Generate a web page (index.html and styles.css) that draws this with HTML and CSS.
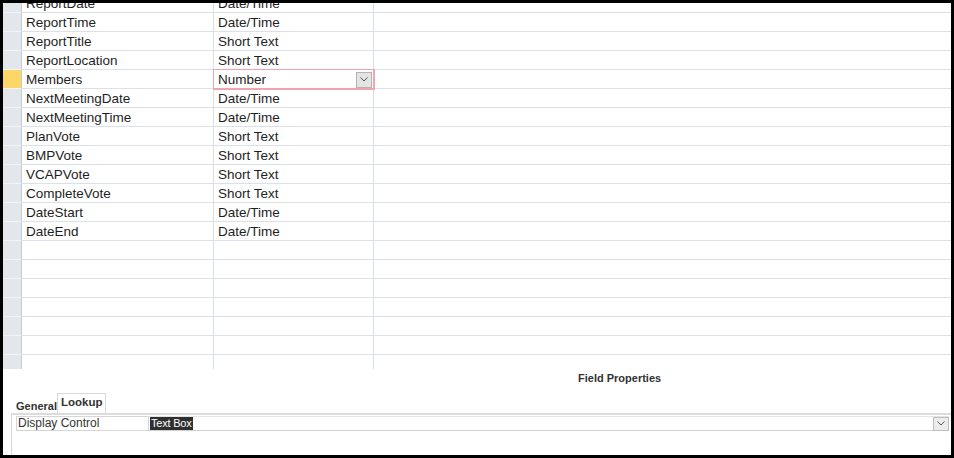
FILE: index.html
```html
<!DOCTYPE html>
<html>
  <head>
    <meta charset="utf-8" />
    <title>Table Design</title>
    <link rel="stylesheet" href="styles.css">
  </head>

  <body>
    <div class="frame">
      <div class="grid">
        <div class="rows">
          <div class="row"><div class="sel"></div><div class="name">ReportDate</div><div class="type">Date/Time</div><div class="rest"></div></div>
          <div class="row"><div class="sel"></div><div class="name">ReportTime</div><div class="type">Date/Time</div><div class="rest"></div></div>
          <div class="row"><div class="sel"></div><div class="name">ReportTitle</div><div class="type">Short Text</div><div class="rest"></div></div>
          <div class="row"><div class="sel"></div><div class="name">ReportLocation</div><div class="type">Short Text</div><div class="rest"></div></div>
          <div class="row current">
            <div class="sel"></div>
            <div class="name">Members</div>
            <div class="type">
              Number
              <span class="drop">
                <svg width="8" height="5" viewBox="0 0 8 5"><polyline points="0.5,0.5 4,4 7.5,0.5" fill="none" stroke="#555" stroke-width="1"/></svg>
              </span>
            </div>
            <div class="rest"></div>
          </div>
          <div class="row"><div class="sel"></div><div class="name">NextMeetingDate</div><div class="type">Date/Time</div><div class="rest"></div></div>
          <div class="row"><div class="sel"></div><div class="name">NextMeetingTime</div><div class="type">Date/Time</div><div class="rest"></div></div>
          <div class="row"><div class="sel"></div><div class="name">PlanVote</div><div class="type">Short Text</div><div class="rest"></div></div>
          <div class="row"><div class="sel"></div><div class="name">BMPVote</div><div class="type">Short Text</div><div class="rest"></div></div>
          <div class="row"><div class="sel"></div><div class="name">VCAPVote</div><div class="type">Short Text</div><div class="rest"></div></div>
          <div class="row"><div class="sel"></div><div class="name">CompleteVote</div><div class="type">Short Text</div><div class="rest"></div></div>
          <div class="row"><div class="sel"></div><div class="name">DateStart</div><div class="type">Date/Time</div><div class="rest"></div></div>
          <div class="row"><div class="sel"></div><div class="name">DateEnd</div><div class="type">Date/Time</div><div class="rest"></div></div>
          <div class="row"><div class="sel"></div><div class="name"></div><div class="type"></div><div class="rest"></div></div>
          <div class="row"><div class="sel"></div><div class="name"></div><div class="type"></div><div class="rest"></div></div>
          <div class="row"><div class="sel"></div><div class="name"></div><div class="type"></div><div class="rest"></div></div>
          <div class="row"><div class="sel"></div><div class="name"></div><div class="type"></div><div class="rest"></div></div>
          <div class="row"><div class="sel"></div><div class="name"></div><div class="type"></div><div class="rest"></div></div>
          <div class="row"><div class="sel"></div><div class="name"></div><div class="type"></div><div class="rest"></div></div>
          <div class="row"><div class="sel"></div><div class="name"></div><div class="type"></div><div class="rest"></div></div>
        </div>
      </div>

      <div class="props-title">Field Properties</div>

      <div class="tabs">
        <div class="tab">General</div>
        <div class="tab active">Lookup</div>
      </div>

      <div class="panel">
        <div class="prop-row">
          <div class="prop-label">Display Control</div>
          <div class="prop-value">
            <span class="picked">Text Box</span>
            <span class="drop small">
              <svg width="8" height="5" viewBox="0 0 8 5"><polyline points="0.5,0.5 4,4 7.5,0.5" fill="none" stroke="#555" stroke-width="1"/></svg>
            </span>
          </div>
        </div>
      </div>
    </div>
  </body>
</html>
```

FILE: styles.css
```css
body,
html {
  margin: 0;
  background: white;
}
.frame {
  width: 954px;
  height: 458px;
  box-sizing: border-box;
  border: 3px solid #000;
  display: flex;
  flex-direction: column;
  font-family: "Liberation Sans", Arial, sans-serif;
  color: #1e1e1e;
}
.grid {
  height: 366px;
  flex: none;
  overflow: hidden;
}
.rows {
  margin-top: -9px;
}
.row {
  display: flex;
  height: 19px;
  font-size: 13.5px;
  line-height: 18px;
}
.row > div {
  box-sizing: border-box;
  border-bottom: 1px solid #dbe1ea;
}
.sel {
  width: 19px;
  flex: none;
  background: #e3e6eb;
  border-right: 1px solid #c6cbd2;
  border-bottom-color: #f1f3f6 !important;
}
.current .sel {
  background: #fdd765;
}
.name {
  width: 192px;
  flex: none;
  padding: 1px 0 0 4px;
  border-right: 1px solid #d8dee8;
  white-space: nowrap;
}
.type {
  width: 160px;
  flex: none;
  padding: 1px 0 0 4px;
  border-right: 1px solid #d8dee8;
  display: flex;
  align-items: center;
  white-space: nowrap;
}
.rest {
  flex: 1;
}
/* focused cell gets the pink frame drawn over the grid lines */
.current .type {
  position: relative;
  z-index: 1;
  box-shadow: 0 0 0 1px #f2a4ac;
  border-right-color: #f2a4ac;
  border-bottom-color: #f2a4ac;
}
.drop {
  margin-left: auto;
  margin-right: 1px;
  width: 16px;
  height: 16px;
  box-sizing: border-box;
  background: #e4e4e4;
  border: 1px solid #b4b4b4;
  display: flex;
  align-items: center;
  justify-content: center;
}
.props-title {
  height: 24px;
  line-height: 18px;
  flex: none;
  font-size: 11px;
  font-weight: bold;
  color: #333;
  padding-left: 575px;
}
.tabs {
  display: flex;
  align-items: flex-end;
  height: 20px;
  flex: none;
  padding-left: 11px;
  font-size: 11px;
  font-weight: bold;
  color: #333;
}
.tab {
  padding: 0 2px;
  line-height: 14px;
  width: 43px;
  box-sizing: border-box;
}
.tab.active {
  width: 49px;
  height: 20px;
  line-height: 16px;
  padding: 0 3px;
  border: 1px solid #d9d9d9;
  border-bottom: none;
  background: #fff;
  font-size: 11.5px;
}
.panel {
  flex: 1;
  margin-left: 8px;
  border-top: 2px solid #dcdcdc;
  border-left: 1px solid #d6d6d6;
  padding: 1px 0 0 4px;
}
.prop-row {
  display: flex;
  height: 15px;
  font-size: 12px;
  line-height: 13px;
}
.prop-label {
  width: 133px;
  box-sizing: border-box;
  padding-left: 1px;
  border: 1px solid #d6d6d6;
  color: #333;
}
.prop-value {
  flex: 1;
  display: flex;
  align-items: center;
  border-top: 1px solid #e4e4e4;
  border-bottom: 1px solid #cfcfcf;
  margin-right: 2px;
}
.picked {
  background: #2f2f2f;
  color: #fff;
  padding: 0 1px;
  margin-left: 1px;
  line-height: 13px;
  font-size: 11px;
  letter-spacing: -0.2px;
}
.drop.small {
  height: 14px;
  width: 16px;
  margin-right: 0;
  background: #ececec;
  border-color: #bdbdbd;
}
```
